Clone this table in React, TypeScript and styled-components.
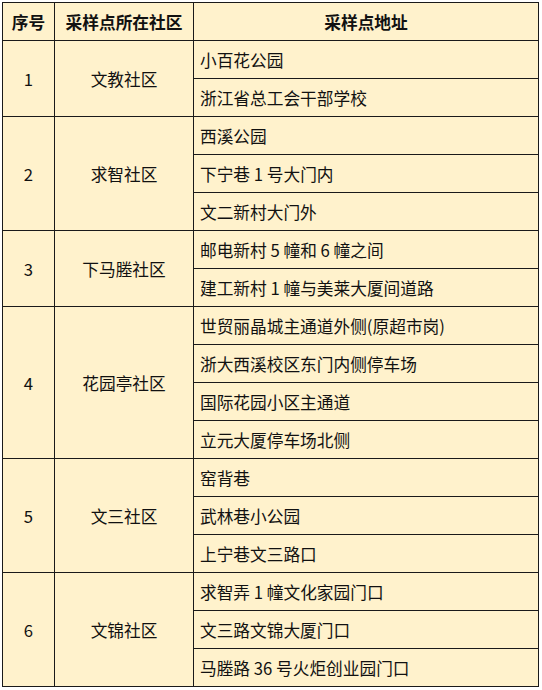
import styled, { createGlobalStyle } from 'styled-components';

const GlobalStyle = createGlobalStyle`
  body {
    margin: 0;
    background: #ffffff;
  }
`;

const Page = styled.div`
  padding: 2px;
`;

const Table = styled.table`
  width: 536px;
  border-collapse: collapse;
  table-layout: fixed;
  background: #fff2cc;
  font-family: 'Noto Sans CJK SC', 'Noto Sans', sans-serif;
  font-size: 16.7px;
  color: #111111;
`;

const Head = styled.th`
  height: 37px;
  padding: 0;
  border: 1px solid #1a1a1a;
  font-weight: 700;
  text-align: center;
  vertical-align: middle;
`;

const Cell = styled.td<{ $center?: boolean }>`
  height: 37px;
  padding: 0 0 0 ${p => (p.$center ? 0 : 6)}px;
  border: 1px solid #1a1a1a;
  text-align: ${p => (p.$center ? 'center' : 'left')};
  vertical-align: middle;
  white-space: nowrap;
`;

type Group = { no: number; name: string; places: string[] };

const groups: Group[] = [
  { no: 1, name: '文教社区', places: ['小百花公园', '浙江省总工会干部学校'] },
  { no: 2, name: '求智社区', places: ['西溪公园', '下宁巷 1 号大门内', '文二新村大门外'] },
  { no: 3, name: '下马塍社区', places: ['邮电新村 5 幢和 6 幢之间', '建工新村 1 幢与美莱大厦间道路'] },
  {
    no: 4,
    name: '花园亭社区',
    places: ['世贸丽晶城主通道外侧(原超市岗)', '浙大西溪校区东门内侧停车场', '国际花园小区主通道', '立元大厦停车场北侧'],
  },
  { no: 5, name: '文三社区', places: ['窑背巷', '武林巷小公园', '上宁巷文三路口'] },
  { no: 6, name: '文锦社区', places: ['求智弄 1 幢文化家园门口', '文三路文锦大厦门口', '马塍路 36 号火炬创业园门口'] },
];

const App = () => (
  <Page>
    <GlobalStyle />
    <Table>
      <colgroup>
        <col style={{ width: 52 }} />
        <col style={{ width: 139 }} />
        <col style={{ width: 345 }} />
      </colgroup>
      <thead>
        <tr>
          <Head>序号</Head>
          <Head>采样点所在社区</Head>
          <Head>采样点地址</Head>
        </tr>
      </thead>
      <tbody>
        {groups.map(g =>
          g.places.map((place, i) => (
            <tr key={`${g.no}-${i}`}>
              {i === 0 && (
                <>
                  <Cell $center rowSpan={g.places.length}>
                    {g.no}
                  </Cell>
                  <Cell $center rowSpan={g.places.length}>
                    {g.name}
                  </Cell>
                </>
              )}
              <Cell>{place}</Cell>
            </tr>
          ))
        )}
      </tbody>
    </Table>
  </Page>
);

export default App;
